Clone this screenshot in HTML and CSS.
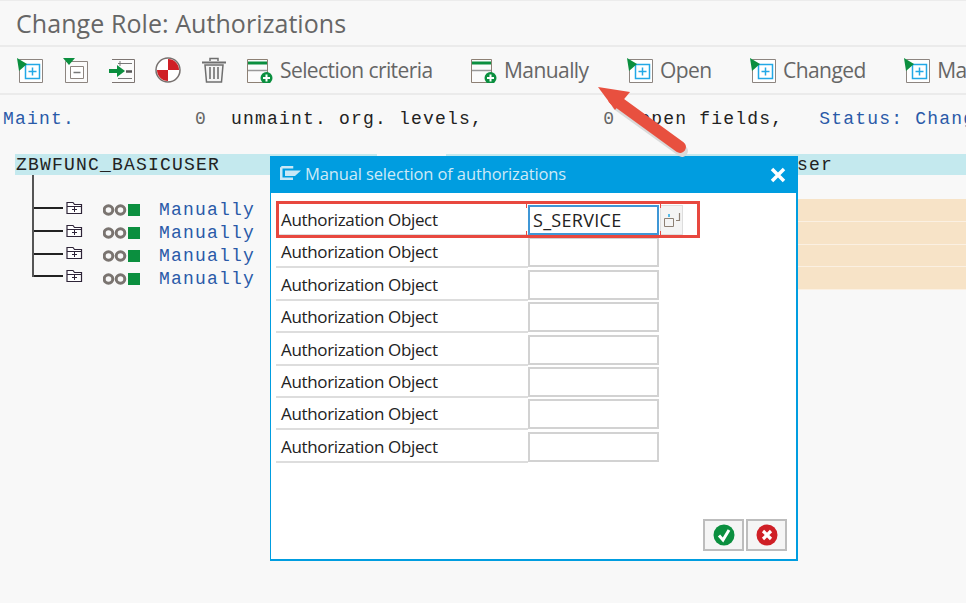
FILE: index.html
```html
<!DOCTYPE html>
<html lang="en">
<head>
    <meta charset="UTF-8">
    <meta name="viewport" content="width=device-width, initial-scale=1.0">
    <title>Change Role: Authorizations</title>
    <link rel="stylesheet" href="styles.css">
</head>
<body>
    <header class="title-bar">
        <h1>Change Role: Authorizations</h1>
    </header>

    <nav class="toolbar">
        <button class="tool icon-only" type="button">
            <svg width="26" height="26" viewBox="0 0 26 26"><use href="#open"/></svg>
        </button>
        <button class="tool icon-only" type="button">
            <svg width="26" height="26" viewBox="0 0 26 26"><path d="M2.500 4.500h22v21h-22z" fill="#fbfbfb" stroke="#8d8580"/><path d="M7.500 9.500h13v12h-13z" fill="#fff" stroke="#8d8580"/><path d="M10.500 15.500h7" stroke="#777" stroke-width="1.500"/><path d="M0 1h12l-6 7z" fill="#0b8f3f"/></svg>
        </button>
        <button class="tool icon-only" type="button">
            <svg width="26" height="26" viewBox="0 0 26 26"><path d="M3 2.500h22.500v23H3" fill="#fbfbfb" stroke="#7d7572"/><path d="M9 6.500h14M9 21.500h14" stroke="#777"/><path d="M11 4v5" stroke="#777"/><path d="M17 14.500h6" stroke="#555" stroke-width="2.500"/><path d="M0 12h8V8l8 6-8 6v-4H0z" fill="#0b8f3f"/></svg>
        </button>
        <button class="tool icon-only" type="button">
            <svg width="26" height="26" viewBox="0 0 26 26"><circle cx="13" cy="13" r="12" fill="#fff" stroke="#77716f" stroke-width="1.500"/><path d="M13 13V2a11 11 0 0 1 11 11zM13 13v11A11 11 0 0 1 2 13z" fill="#cf1f26"/></svg>
        </button>
        <button class="tool icon-only" type="button">
            <svg width="26" height="26" viewBox="0 0 26 26"><path d="M1 5.500h24" stroke="#6f6f6f" stroke-width="2"/><path d="M9 4V1.500h8V4" fill="none" stroke="#6f6f6f" stroke-width="1.500"/><path d="M4 8l1.500 17h15L22 8z" fill="#f4f4f4" stroke="#6f6f6f" stroke-width="1.500"/><path d="M9 10v12M13 10v12M17 10v12" stroke="#8a8a8a" stroke-width="2"/></svg>
        </button>
        <button class="tool" type="button">
            <svg width="26" height="26" viewBox="0 0 26 26"><use href="#criteria"/></svg>
            <span>Selection criteria</span>
        </button>
        <button class="tool" type="button">
            <svg width="26" height="26" viewBox="0 0 26 26"><use href="#criteria"/></svg>
            <span>Manually</span>
        </button>
        <button class="tool" type="button">
            <svg width="26" height="26" viewBox="0 0 26 26"><use href="#open"/></svg>
            <span>Open</span>
        </button>
        <button class="tool" type="button">
            <svg width="26" height="26" viewBox="0 0 26 26"><use href="#open"/></svg>
            <span>Changed</span>
        </button>
        <button class="tool" type="button">
            <svg width="26" height="26" viewBox="0 0 26 26"><use href="#open"/></svg>
            <span>Ma</span>
        </button>
    </nav>

    <svg class="defs" width="0" height="0">
        <defs>
            <g id="criteria">
                <path d="M0.500 2.500h20v23h-20z" fill="#fbfbfb" stroke="#8d8074"/>
                <path d="M1 6h19" stroke="#0b8f3f" stroke-width="3"/>
                <path d="M1 13.500h19" stroke="#999" stroke-width="1.500"/>
                <circle cx="19.500" cy="21" r="6" fill="#0b8f3f"/>
                <path d="M19.500 17.500v7M16 21h7" stroke="#fff" stroke-width="2"/>
            </g>
            <g id="open">
                <path d="M2.500 2.500h23v23h-23z" fill="#fff" stroke="#8d8580"/>
                <path d="M8.500 7.500h14v14h-14z" fill="#fff" stroke="#22a8e6" stroke-width="1.500"/>
                <path d="M15.500 10.500v8M11.500 14.500h8" stroke="#22a8e6" stroke-width="1.500"/>
                <path d="M0 1l10 6-8 7z" fill="#0b8f3f"/>
            </g>
            <g id="folder">
                <path d="M1 12.500V1.500h6l1.500 2h7v9z" fill="#fff" stroke="#2e2438" stroke-width="1.200"/>
                <path d="M1 5.500h14.500" stroke="#2e2438"/>
                <path d="M8.500 6v5M6 8.500h5" stroke="#2e2438"/>
            </g>
            <g id="lights">
                <circle cx="5.500" cy="6" r="4.300" fill="none" stroke="#7a7470" stroke-width="3"/>
                <circle cx="17.500" cy="6" r="4.300" fill="none" stroke="#7a7470" stroke-width="3"/>
                <path d="M25 0h12v12H25z" fill="#0b8f3f"/>
            </g>
        </defs>
    </svg>

    <p class="mono status-line"><span class="link">Maint.</span>          <span class="count">0</span>  unmaint. org. levels,          <span class="count">0</span>  open fields,   <span class="link">Status: Chang</span></p>

    <div class="role-bar mono">
        <div class="role-name">ZBWFUNC_BASICUSER</div>
        <div class="role-user">user</div>
    </div>

    <div class="stem"></div>
    <div class="tree">
        <div class="tree-row">
            <div class="branch"></div>
            <svg class="folder" width="17" height="14" viewBox="0 0 17 14"><use href="#folder"/></svg>
            <svg class="lights" width="37" height="12" viewBox="0 0 37 12"><use href="#lights"/></svg>
            <span class="mono link">Manually</span>
            <div class="peach"></div>
        </div>
        <div class="tree-row">
            <div class="branch"></div>
            <svg class="folder" width="17" height="14" viewBox="0 0 17 14"><use href="#folder"/></svg>
            <svg class="lights" width="37" height="12" viewBox="0 0 37 12"><use href="#lights"/></svg>
            <span class="mono link">Manually</span>
            <div class="peach"></div>
        </div>
        <div class="tree-row">
            <div class="branch"></div>
            <svg class="folder" width="17" height="14" viewBox="0 0 17 14"><use href="#folder"/></svg>
            <svg class="lights" width="37" height="12" viewBox="0 0 37 12"><use href="#lights"/></svg>
            <span class="mono link">Manually</span>
            <div class="peach"></div>
        </div>
        <div class="tree-row last">
            <div class="branch"></div>
            <svg class="folder" width="17" height="14" viewBox="0 0 17 14"><use href="#folder"/></svg>
            <svg class="lights" width="37" height="12" viewBox="0 0 37 12"><use href="#lights"/></svg>
            <span class="mono link">Manually</span>
            <div class="peach"></div>
        </div>
    </div>

    <section class="dialog">
        <div class="dialog-head">
            <svg width="21" height="14" viewBox="0 0 21 14"><path d="M1.250 1.250h12M13 12.750H1.250v-11.500" fill="none" stroke="#c9e8f6" stroke-width="2.500"/><path d="M5 4.500h16L15 10H5z" fill="#c9e8f6"/></svg>
            <h2>Manual selection of authorizations</h2>
            <svg class="close" width="16" height="16" viewBox="0 0 16 16"><path d="M2 2l12 12M14 2L2 14" stroke="#fff" stroke-width="3.500"/></svg>
        </div>
        <div class="dialog-body">
            <div class="form-row">
                <label>Authorization Object</label>
                <div class="field focus">S_SERVICE</div>
                <button class="f4" type="button">
                    <svg width="18" height="16" viewBox="0 0 18 16"><path d="M1.500 6.500h9v8h-9z" fill="none" stroke="#8d8074"/><path d="M6 2v3" stroke="#22a8e6" stroke-width="1.500"/><path d="M16.500 1v7.500H13" fill="none" stroke="#8d8074" stroke-width="1.200"/></svg>
                </button>
            </div>
            <div class="form-row"><label>Authorization Object</label><div class="field"></div></div>
            <div class="form-row"><label>Authorization Object</label><div class="field"></div></div>
            <div class="form-row"><label>Authorization Object</label><div class="field"></div></div>
            <div class="form-row"><label>Authorization Object</label><div class="field"></div></div>
            <div class="form-row"><label>Authorization Object</label><div class="field"></div></div>
            <div class="form-row"><label>Authorization Object</label><div class="field"></div></div>
            <div class="form-row"><label>Authorization Object</label><div class="field"></div></div>
        </div>
        <div class="dialog-foot">
            <button type="button">
                <svg width="22" height="22" viewBox="0 0 22 22"><circle cx="11" cy="11" r="10.500" fill="#0b8f3f"/><path d="M6 11.500l4 4.500 6-10" fill="none" stroke="#fff" stroke-width="3"/></svg>
            </button>
            <button type="button">
                <svg width="22" height="22" viewBox="0 0 22 22"><circle cx="11" cy="11" r="10.500" fill="#cf1f26"/><path d="M7 7l8 8M15 7l-8 8" stroke="#fff" stroke-width="3.200"/></svg>
            </button>
        </div>
    </section>

    <!-- red marker drawn over the screenshot -->
    <div class="marker"></div>
    <svg class="arrow" width="110" height="80" viewBox="0 0 110 80">
        <path d="M21 18L85 64" stroke="#d9d9d9" stroke-width="12" stroke-linecap="round" transform="translate(1 3)"/>
        <path d="M18 15L84 63" stroke="#e8503f" stroke-width="12" stroke-linecap="round"/>
        <path d="M2 3L34 8 19 26z" fill="#e8503f"/>
    </svg>
</body>
</html>
```

FILE: styles.css
```css
body {
    font-family: 'Open Sans', sans-serif;
    margin: 0;
    padding: 0;
    width: 966px;
    height: 603px;
    overflow: hidden;
    position: relative;
    background-color: #f8f8f8;
    color: #222;
}

.mono {
    font-family: 'Liberation Mono', monospace;
    font-size: 18px;
    letter-spacing: 1.2px;
    line-height: 22px;
}

.link {
    color: #2a5aa8;
}

/* Top of page */
.title-bar {
    height: 44px;
    border-top: 1px solid #ececec;
    border-bottom: 2px solid #ebebeb;
    display: flex;
    align-items: center;
    padding-left: 16px;
}

.title-bar h1 {
    margin: 0;
    font-size: 25px;
    font-weight: 400;
    color: #666;
    letter-spacing: 0.07px;
}

.toolbar {
    height: 46px;
    border-bottom: 2px solid #ebebeb;
    display: flex;
    align-items: center;
    padding-left: 17px;
    white-space: nowrap;
}

.tool {
    display: flex;
    align-items: center;
    gap: 7px;
    padding: 0;
    margin-right: 38.5px;
    border: none;
    background: none;
    font-family: inherit;
    font-size: 21px;
    color: #666;
    letter-spacing: -0.58px;
}

.tool.icon-only {
    margin-right: 20px;
}

.defs {
    display: block;
}

.status-line {
    margin: 13px 0 0;
    padding-left: 3px;
    white-space: pre;
}

.count {
    color: #666;
}

/* Role header */
.role-bar {
    display: flex;
    margin-top: 24px;
    padding-left: 15px;
    height: 21px;
}

.role-name,
.role-user {
    background-color: #c4e9ee;
}

.role-name {
    width: 361px;
    padding-left: 1px;
}

.role-user {
    margin-left: 69px;
    flex: 1;
    padding-left: 339px;
}

/* Tree */
.stem {
    width: 2px;
    height: 24px;
    margin-left: 32px;
    background-color: #555;
}

.tree-row {
    display: flex;
    align-items: center;
    height: 22.75px;
    padding-left: 32px;
}

.branch {
    width: 31px;
    height: 100%;
    background:
        linear-gradient(#555, #555) left top / 2px 100% no-repeat,
        linear-gradient(#222, #222) left 8px / 100% 2px no-repeat;
}

.tree-row.last .branch {
    background:
        linear-gradient(#555, #555) left top / 2px 10px no-repeat,
        linear-gradient(#222, #222) left 8px / 100% 2px no-repeat;
}

.folder {
    margin: -5px 0 0 3px;
}

.lights {
    margin-left: 20px;
}

.tree-row .link {
    margin-left: 19px;
    width: 122px;
}

.peach {
    flex: 1;
    height: 100%;
    box-sizing: border-box;
    border-bottom: 1.5px solid #fbf0e2;
    background-color: #f7e3c7;
}

/* Dialog */
.dialog {
    position: absolute;
    left: 270px;
    top: 156px;
    width: 528px;
    height: 405px;
    box-sizing: border-box;
    border: 2px solid #009de0;
    border-top: none;
    border-left-width: 1.5px;
    background-color: #fff;
    display: flex;
    flex-direction: column;
}

.dialog-head {
    height: 37px;
    box-sizing: border-box;
    flex: none;
    background-color: #009de0;
    display: flex;
    align-items: center;
    padding: 0 12px 3px 10.5px;
    margin: 0 -2px 0 -1.5px;
    gap: 4px;
}

.dialog-head h2 {
    margin: 0;
    flex: 1;
    font-size: 16.5px;
    font-weight: 400;
    color: #cdeaf7;
    letter-spacing: -0.13px;
}

.close {
    margin-top: 3px;
}

.dialog-body {
    padding: 12px 0 0 5px;
    flex: 1;
}

.form-row {
    display: flex;
    align-items: flex-start;
    height: 32.4px;
}

.form-row label {
    width: 252px;
    height: 31px;
    box-sizing: border-box;
    border-bottom: 2px solid #ddd;
    padding-left: 5px;
    font-size: 17px;
    letter-spacing: -0.35px;
    line-height: 30px;
    color: #222;
}

.field {
    width: 131px;
    height: 30px;
    box-sizing: border-box;
    border: 2px solid #d2d2d2;
    background-color: #fff;
    padding-left: 3px;
    font-size: 18px;
    letter-spacing: 0.3px;
    line-height: 26px;
    color: #222;
}

.field.focus {
    border-color: #3f97d6;
}

.f4 {
    width: 23px;
    height: 30px;
    margin-left: 1px;
    padding: 0;
    border: 1px solid #ddd;
    background-color: #f4f4f4;
    display: flex;
    align-items: center;
    justify-content: center;
}

.dialog-foot {
    display: flex;
    justify-content: flex-end;
    gap: 2px;
    padding: 0 9px 8px 0;
}

.dialog-foot button {
    width: 41px;
    height: 32px;
    padding: 0;
    border: 2px solid #bdbdbd;
    background-color: #f5f5f5;
    display: flex;
    align-items: center;
    justify-content: center;
}

/* Markup on top */
.marker {
    position: absolute;
    left: 276px;
    top: 201px;
    width: 424px;
    height: 37px;
    box-sizing: border-box;
    border: 3px solid #e8483f;
    background:
        linear-gradient(#e8483f, #e8483f) 247px 0 / 1px 4px no-repeat,
        linear-gradient(#e8483f, #e8483f) 247px 100% / 1px 4px no-repeat,
        linear-gradient(#e8483f, #e8483f) 381px 0 / 1px 4px no-repeat,
        linear-gradient(#e8483f, #e8483f) 381px 100% / 1px 4px no-repeat;
}

.arrow {
    position: absolute;
    left: 596px;
    top: 84px;
}
```
